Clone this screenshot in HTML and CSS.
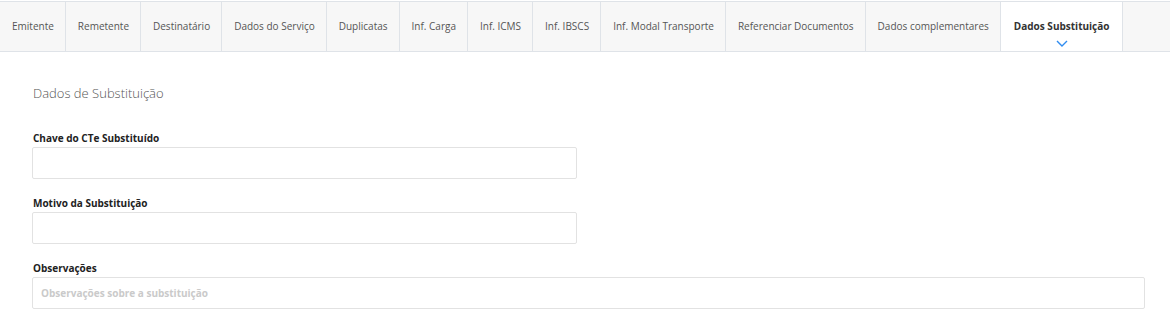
FILE: index.html
```html
<!DOCTYPE html>
<html>

<head>
    <meta charset="UTF-8">
    <meta name="viewport" content="width=device-width, initial-scale=1.0">
    <title>Dados Substituição</title>
    <link rel="stylesheet" href="styles.css">
</head>

<body>

    <!-- =========== Tabs =========== -->
    <ul class="tabs">
        <li><a href="#">Emitente</a></li>
        <li><a href="#">Remetente</a></li>
        <li><a href="#">Destinatário</a></li>
        <li><a href="#">Dados do Serviço</a></li>
        <li><a href="#">Duplicatas</a></li>
        <li><a href="#">Inf. Carga</a></li>
        <li><a href="#">Inf. ICMS</a></li>
        <li><a href="#">Inf. IBSCS</a></li>
        <li><a href="#">Inf. Modal Transporte</a></li>
        <li><a href="#">Referenciar Documentos</a></li>
        <li><a href="#">Dados complementares</a></li>
        <li class="active">
            <a href="#">Dados Substituição</a>
            <svg class="chevron" width="12" height="7" viewBox="0 0 12 7">
                <path d="M1 1 L6 6 L11 1" fill="none" stroke="#2f8cf0" stroke-width="1.4" />
            </svg>
        </li>
    </ul>

    <!-- =========== Form =========== -->
    <div class="content">
        <h3 class="sectionTitle">Dados de Substituição</h3>

        <div class="row">
            <div class="field">
                <label>Chave do CTe Substituído</label>
                <input type="text">
            </div>
        </div>

        <div class="row">
            <div class="field">
                <label>Motivo da Substituição</label>
                <input type="text">
            </div>
        </div>

        <div class="row full">
            <div class="field">
                <label>Observações</label>
                <input type="text" placeholder="Observações sobre a substituição">
            </div>
        </div>
    </div>

</body>

</html>
```

FILE: styles.css
```css
* {
    font-family: "Open Sans", sans-serif;
    margin: 0;
    padding: 0;
    box-sizing: border-box;
}

:root {
    --border: #dfe3e8;
    --tab-bg: #f7f7f7;
    --text: #555;
    --dark: #333;
    --blue: #2f8cf0;
}

body {
    background: #fff;
    min-height: 100vh;
    overflow-x: hidden;
}

.tabs {
    display: flex;
    list-style: none;
    margin-top: 1px;
    height: 51px;
    background: var(--tab-bg);
    border-top: 1px solid var(--border);
    border-bottom: 1px solid var(--border);
}

.tabs li {
    position: relative;
    display: flex;
    align-items: center;
    padding: 0 11px 1px 12px;
    border-right: 1px solid var(--border);
}

.tabs li a {
    font-size: 10px;
    color: var(--text);
    text-decoration: none;
    white-space: nowrap;
}

.tabs li.active {
    background: #fff;
    padding: 0 13px 1px 13px;
}

.tabs li.active a {
    font-weight: 700;
    color: var(--dark);
}

.tabs li .chevron {
    position: absolute;
    left: 50%;
    bottom: 4px;
    margin-left: -6px;
}

.content {
    padding: 32px 25px 0 32px;
}

.sectionTitle {
    font-size: 13px;
    font-weight: 300;
    color: var(--text);
    line-height: 18px;
    margin-left: 1px;
    margin-bottom: 29px;
}

.row {
    display: grid;
    grid-template-columns: 1fr 1fr;
    column-gap: 23px;
    margin-bottom: 17px;
}

.row.full {
    grid-template-columns: 1fr;
}

.field label {
    display: block;
    font-size: 10px;
    font-weight: 700;
    color: #222;
    line-height: 14px;
    margin-bottom: 2px;
    padding-left: 1px;
}

.field input {
    display: block;
    width: 100%;
    height: 32px;
    border: 1px solid #e2e2e2;
    border-radius: 2px;
    padding: 0 8px;
    font-size: 10px;
    font-weight: 700;
    color: var(--dark);
    outline: none;
}

.field input::placeholder {
    color: #cacaca;
}
```
